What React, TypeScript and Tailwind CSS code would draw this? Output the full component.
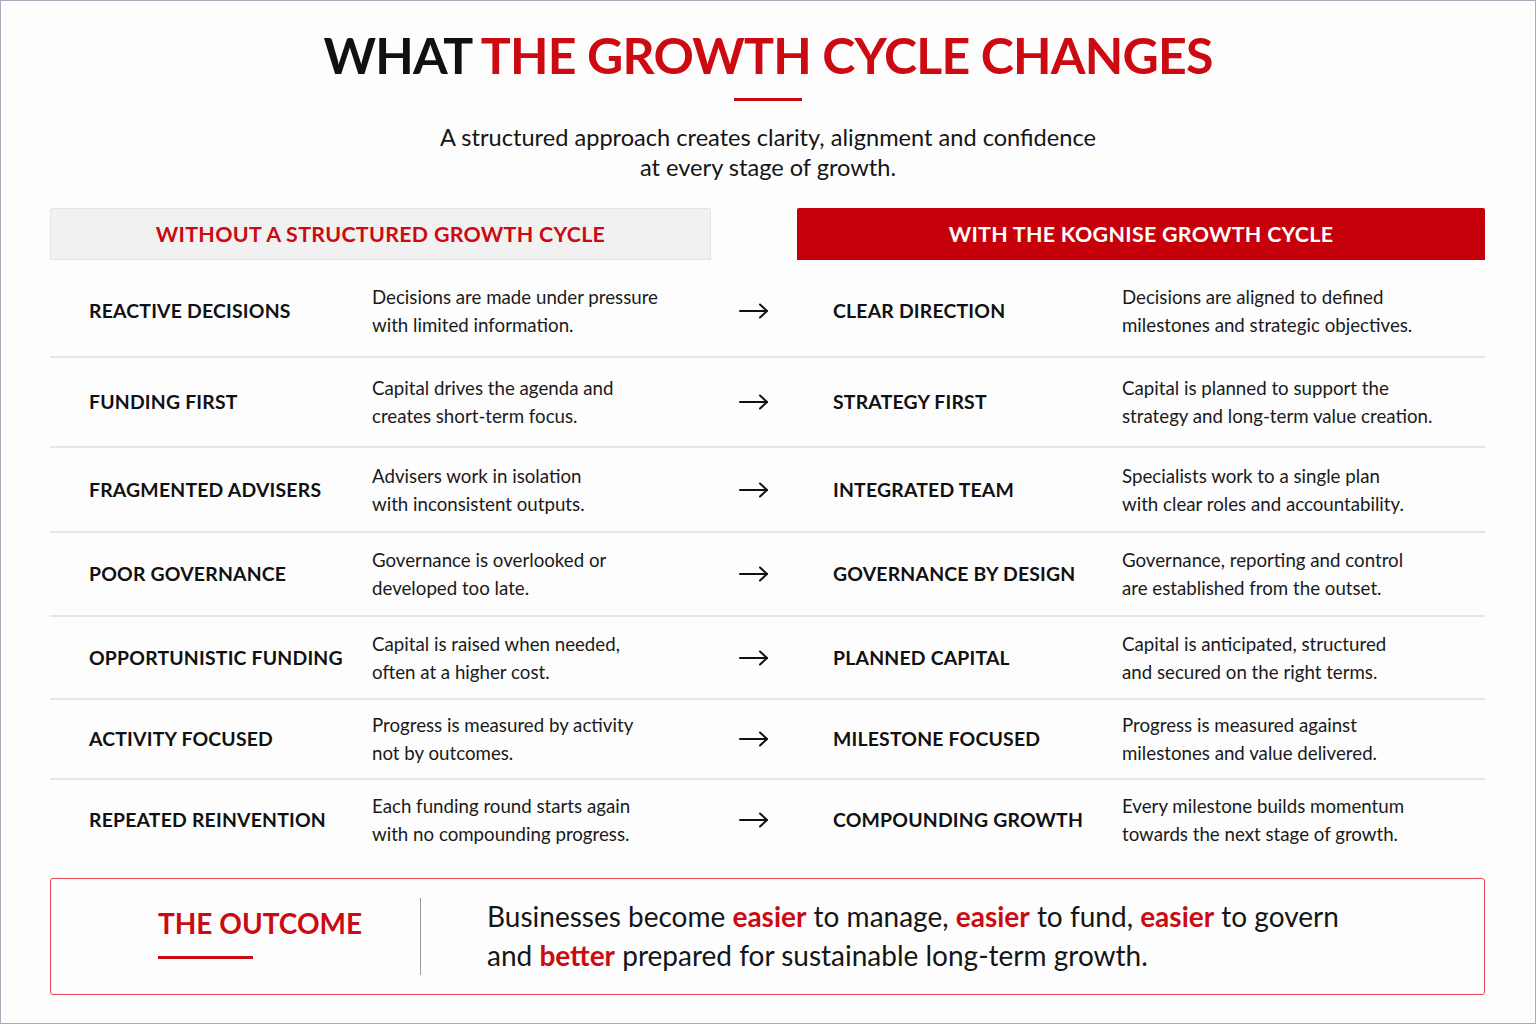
import React from "react";

const rows = [
  { h: "h-[98px] pt-[6px]", l: "REACTIVE DECISIONS", ld: ["Decisions are made under pressure", "with limited information."], r: "CLEAR DIRECTION", rd: ["Decisions are aligned to defined", "milestones and strategic objectives."] },
  { h: "h-[90px]", l: "FUNDING FIRST", ld: ["Capital drives the agenda and", "creates short-term focus."], r: "STRATEGY FIRST", rd: ["Capital is planned to support the", "strategy and long-term value creation."] },
  { h: "h-[85px]", l: "FRAGMENTED ADVISERS", ld: ["Advisers work in isolation", "with inconsistent outputs."], r: "INTEGRATED TEAM", rd: ["Specialists work to a single plan", "with clear roles and accountability."] },
  { h: "h-[84px]", l: "POOR GOVERNANCE", ld: ["Governance is overlooked or", "developed too late."], r: "GOVERNANCE BY DESIGN", rd: ["Governance, reporting and control", "are established from the outset."] },
  { h: "h-[83px]", l: "OPPORTUNISTIC FUNDING", ld: ["Capital is raised when needed,", "often at a higher cost."], r: "PLANNED CAPITAL", rd: ["Capital is anticipated, structured", "and secured on the right terms."] },
  { h: "h-[80px]", l: "ACTIVITY FOCUSED", ld: ["Progress is measured by activity", "not by outcomes."], r: "MILESTONE FOCUSED", rd: ["Progress is measured against", "milestones and value delivered."] },
  { h: "h-[80px]", l: "REPEATED REINVENTION", ld: ["Each funding round starts again", "with no compounding progress."], r: "COMPOUNDING GROWTH", rd: ["Every milestone builds momentum", "towards the next stage of growth."] },
];

function Arrow() {
  return (
    <svg width="30" height="16" viewBox="0 0 30 16" fill="none" stroke="#111" strokeWidth="2" strokeLinecap="round" strokeLinejoin="round">
      <path d="M1 8h27" />
      <path d="M21 1.5l7 6.5-7 6.5" />
    </svg>
  );
}

export default function App() {
  return (
    <div className="w-[1536px] h-[1024px] bg-[#fdfdfd] border border-[#a9abbb] flex flex-col items-center text-[#111] font-['Lato','Open_Sans',sans-serif] overflow-hidden">
      <h1 className="mt-[27px] text-[50px] leading-[54px] font-bold tracking-[-0.8px] whitespace-nowrap">
        WHAT <span className="text-[#cc0a12]">THE GROWTH CYCLE CHANGES</span>
      </h1>
      <div className="mt-[16px] w-[68px] h-[3px] bg-[#cc0a12]" />
      <p className="mt-[21px] text-[23.6px] leading-[30px] text-center text-[#151515]">
        A structured approach creates clarity, alignment and confidence
        <br />
        at every stage of growth.
      </p>

      <div className="mt-[26px] w-[1435px] self-start ml-[49px]">
        <div className="flex">
          <div className="w-[661px] h-[52px] bg-[#f1f1f1] border border-[#e4e4e6] rounded-t-[2px] flex items-center justify-center text-[21.4px] font-bold text-[#cc0a12] tracking-[0.3px]">
            WITHOUT A STRUCTURED GROWTH CYCLE
          </div>
          <div className="w-[86px]" />
          <div className="w-[688px] h-[52px] bg-[#c6000b] rounded-t-[2px] flex items-center justify-center text-[21.4px] font-bold text-white tracking-[0.3px]">
            WITH THE KOGNISE GROWTH CYCLE
          </div>
        </div>

        {rows.map((r, i) => (
          <div
            key={r.l}
            className={`${r.h} flex items-center ${i < rows.length - 1 ? "border-b-2 border-[#e6e6ea]" : ""}`}
          >
            <div className="w-[322px] pl-[39px] text-[19.4px] font-bold tracking-[0.2px] whitespace-nowrap">{r.l}</div>
            <div className="w-[339px] text-[18.7px] leading-[28px] text-[#1a1a1a] whitespace-nowrap">
              {r.ld[0]}
              <br />
              {r.ld[1]}
            </div>
            <div className="w-[86px] flex justify-center">
              <Arrow />
            </div>
            <div className="w-[325px] pl-[36px] text-[19.4px] font-bold tracking-[0.2px] whitespace-nowrap">{r.r}</div>
            <div className="w-[363px] text-[18.7px] leading-[28px] text-[#1a1a1a] whitespace-nowrap">
              {r.rd[0]}
              <br />
              {r.rd[1]}
            </div>
          </div>
        ))}

        <div className="mt-[18px] h-[117px] border border-[#e34850] rounded-[3px] flex items-center">
          <div className="w-[369px] pl-[107px] flex flex-col -mt-[8px]">
            <div className="text-[28px] leading-[34px] font-bold text-[#cc0a12] whitespace-nowrap">THE OUTCOME</div>
            <div className="mt-[16px] w-[95px] h-[3px] bg-[#cc0a12]" />
          </div>
          <div className="w-px h-[77px] bg-[#9a9a9a]" />
          <div className="pl-[66px] text-[28px] leading-[39px] text-[#151515] whitespace-nowrap -mt-[2px]">
            Businesses become <span className="font-bold text-[#cc0a12]">easier</span> to manage,{" "}
            <span className="font-bold text-[#cc0a12]">easier</span> to fund,{" "}
            <span className="font-bold text-[#cc0a12]">easier</span> to govern
            <br />
            and <span className="font-bold text-[#cc0a12]">better</span> prepared for sustainable long-term growth.
          </div>
        </div>
      </div>
    </div>
  );
}
